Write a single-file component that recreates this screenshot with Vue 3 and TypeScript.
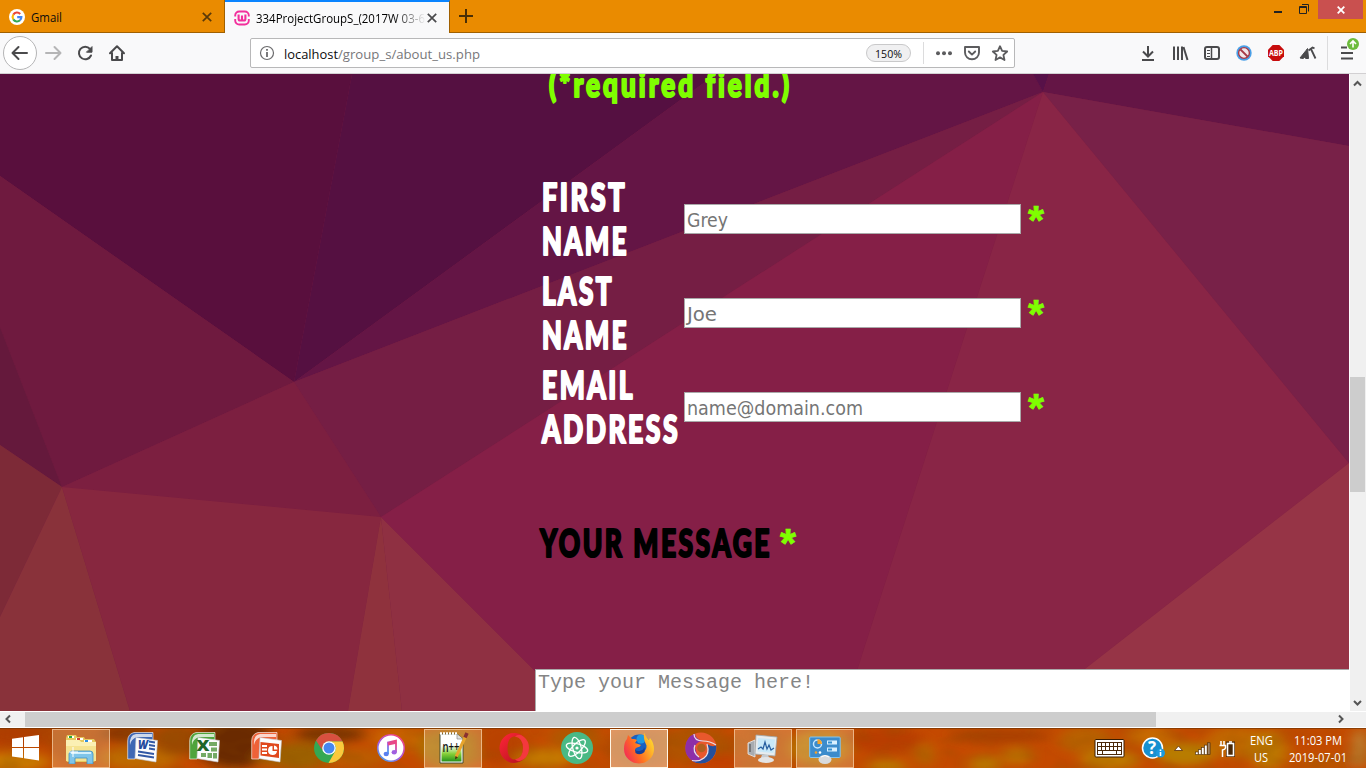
<script setup lang="ts">
import { h } from 'vue'

interface FitProps { t: string; w: number; h: number; b: number }

// One line of text set to an exact advance width.
const Fit = (p: FitProps) =>
  h('svg', { width: p.w, height: p.h, style: { overflow: 'visible', display: 'block', flex: 'none' } }, [
    h('text', { x: 0, y: p.b, textLength: p.w, lengthAdjust: 'spacingAndGlyphs', fill: 'currentColor' }, p.t),
  ])
Fit.props = ['t', 'w', 'h', 'b']

const facets: { pts: string; c: string }[] = [
  { pts: '0,0 352,0 294,308 0,102', c: '#590f3d' },
  { pts: '352,0 716,0 294,308', c: '#551041' },
  { pts: '716,0 1033,0 1043,18 294,308', c: '#641545' },
  { pts: '1033,0 1049,0 1043,18', c: '#571148' },
  { pts: '1049,0 1349,0 1349,72 1043,18', c: '#641545' },
  { pts: '294,308 1043,18 381,443', c: '#751e44' },
  { pts: '0,102 294,308 62,413 0,253', c: '#6f1a3f' },
  { pts: '0,253 62,413 0,371', c: '#65193c' },
  { pts: '0,371 62,413 0,543', c: '#7d2a37' },
  { pts: '0,543 62,413 130,637 0,637', c: '#89323a' },
  { pts: '62,413 294,308 381,443', c: '#7c1f40' },
  { pts: '62,413 381,443 348,637 130,637', c: '#87273f' },
  { pts: '381,443 402,637 348,637', c: '#8f323d' },
  { pts: '381,443 575,637 402,637', c: '#8f3042' },
  { pts: '381,443 1043,18 844,637 575,637', c: '#851f47' },
  { pts: '1043,18 1349,389 1031,637 844,637', c: '#892546' },
  { pts: '1043,18 1349,72 1349,389', c: '#782148' },
  { pts: '1349,389 1349,637 1031,637', c: '#963446' },
]

const rows = [
  { a: 'FIRST', aw: 85, b: 'NAME', bw: 87, ph: 'Grey', pw: 41 },
  { a: 'LAST', aw: 72, b: 'NAME', bw: 87, ph: 'Joe', pw: 30 },
  { a: 'EMAIL', aw: 93, b: 'ADDRESS', bw: 138, ph: 'name@domain.com', pw: 176 },
]

const blobs: [number, number, number, number, string][] = [
  [20, 5, 40, 14, '#b03c00'], [10, 34, 40, 9, '#c87a00'], [75, 14, 30, 18, '#b04400'], [140, 30, 40, 12, '#bd6a00'],
  [125, 5, 26, 9, '#8a3800'], [178, 12, 26, 16, '#9c4a00'], [235, 16, 40, 24, '#6b2a00'], [275, 30, 20, 8, '#a66000'],
  [300, 28, 30, 14, '#9c6000'], [330, 6, 35, 8, '#7a3400'], [355, 30, 32, 10, '#bb5c00'], [400, 10, 30, 12, '#c86200'],
  [450, 20, 32, 20, '#a87000'], [500, 16, 24, 22, '#b94200'], [545, 30, 30, 10, '#c47800'], [575, 10, 26, 12, '#b05800'],
  [640, 20, 34, 20, '#a84a00'], [695, 18, 32, 20, '#b05200'], [720, 34, 30, 8, '#c24000'], [765, 20, 40, 18, '#b84c00'],
  [820, 20, 30, 18, '#b87400'], [885, 12, 40, 12, '#b83c00'], [925, 26, 9, 12, '#bc6800'], [887, 38, 20, 6, '#b87800'],
  [985, 36, 16, 9, '#b87400'], [1017, 28, 15, 9, '#bd7000'], [1000, 8, 50, 7, '#a94000'], [1085, 12, 26, 14, '#b86000'],
  [1110, 32, 30, 10, '#bd7800'], [1150, 8, 24, 10, '#c86a00'], [1185, 26, 30, 12, '#b87c00'], [1235, 14, 30, 16, '#c06600'],
  [1268, 22, 20, 20, '#bb7600'], [1310, 10, 30, 12, '#c24800'], [1325, 34, 30, 8, '#b85400'], [1360, 20, 6, 20, '#b89040'],
]

const tasks: { id: string; open?: boolean; active?: boolean }[] = [
  { id: 'explorer', open: true }, { id: 'word' }, { id: 'excel' }, { id: 'ppt' }, { id: 'chrome' }, { id: 'itunes' },
  { id: 'npp', open: true }, { id: 'opera' }, { id: 'atom' }, { id: 'firefox', active: true }, { id: 'swirl' },
  { id: 'monitor', open: true }, { id: 'panel', open: true },
]
const bars = [0, 1, 2, 3, 4]
const keys = [0, 1, 2, 3, 4, 5]
</script>

<template>
  <div class="screen">
    <div class="tabs">
      <div class="tab">
        <svg class="fav" width="16" height="16" viewBox="0 0 16 16">
          <circle cx="8" cy="8" r="8" fill="#fff" />
          <g fill="none" stroke-width="2.1">
            <path d="M4.3 5.6A4.4 4.4 0 0 1 11.2 4.9" stroke="#ea4335" />
            <path d="M4.3 5.6A4.6 4.6 0 0 0 4.3 10.4" stroke="#fbbc05" />
            <path d="M4.3 10.4A4.4 4.4 0 0 0 11 11.3" stroke="#34a853" />
            <path d="M8.2 8.1H12.4A4.4 4.4 0 0 1 11 11.3" stroke="#4285f4" />
          </g>
        </svg>
        <Fit t="Gmail" :w="31" :h="16" :b="13" />
        <svg class="x" width="10" height="10" viewBox="0 0 10 10"><path d="M.8.8 9.2 9.2M9.2.8.8 9.2" stroke="#5b3a08" stroke-width="1.7" /></svg>
      </div>
      <div class="tab on">
        <svg class="fav" width="16" height="16" viewBox="0 0 16 16">
          <g fill="none" stroke="#f22f9c" stroke-width="1.9">
            <path d="M1.200 6.500V5.500a4 4 0 0 1 4-4h5.600a4 4 0 0 1 4 4v1M1.200 9v1.500a4 4 0 0 0 4 4h5.600a4 4 0 0 0 4-4V9" />
            <path d="M4.600 4.500v4.500a1.500 1.500 0 0 0 1.500 1.500H6.500a1.500 1.500 0 0 0 1.500-1.500V5.500M8 9A1.500 1.500 0 0 0 9.500 10.500h.4a1.500 1.500 0 0 0 1.500-1.500V4.500" stroke-width="2.100" />
          </g>
        </svg>
        <div class="clip"><Fit t="334ProjectGroupS_(2017W 03-6" :w="169" :h="16" :b="13" /></div>
        <svg class="x" width="10" height="10" viewBox="0 0 10 10"><path d="M.8.8 9.200 9.200M9.200.8.8 9.200" stroke="#4a4a4c" stroke-width="1.7" /></svg>
      </div>
      <div class="rest">
        <svg class="plus" width="14" height="14" viewBox="0 0 14 14"><path d="M7 0V14M0 7H14" stroke="#4a2f06" stroke-width="2" /></svg>
        <svg class="ctl" width="36" height="20" viewBox="0 0 36 20">
          <path d="M0 12H8" stroke="#222" stroke-width="2" />
          <path d="M25.500 6.500h7v7h-7zM25 7.500h8M28 4.500h6.500v7" fill="none" stroke="#222" />
        </svg>
        <div class="close"><svg width="8" height="8" viewBox="0 0 8 8"><path d="M.7.7 7.300 7.300M7.300.7.7 7.300" stroke="#fff" stroke-width="1.800" /></svg></div>
      </div>
    </div>

    <div class="bar">
      <svg class="nav" width="134" height="40" viewBox="0 33 134 40">
        <circle cx="20" cy="53" r="16.500" fill="#fff" stroke="#b5b5b6" />
        <g fill="none" stroke="#4a4a4c" stroke-width="2" stroke-linejoin="round" stroke-linecap="round">
          <path d="M13 53H27M18.500 47 12.500 53 18.500 59" />
          <path d="M46 53H60M54.500 47 60.500 53 54.500 59" stroke="#b5b5b6" />
          <path d="M90 48.800A6.300 6.300 0 1 0 91 55.500" />
          <path d="M92 47V52.200H86.800Z" fill="#4a4a4c" stroke-width="1" />
          <path d="M110 53.200 117 46.200 124 53.200M112 53V60H122V53" />
          <path d="M117 60V56" stroke-width="3" stroke-linecap="butt" />
        </g>
      </svg>
      <div class="url">
        <svg class="info" width="16" height="16" viewBox="0 0 16 16"><circle cx="8" cy="8" r="6.500" fill="none" stroke="#6b6b6d" stroke-width="1.200" /><path d="M8 7V12M8 4V5.800" stroke="#6b6b6d" stroke-width="1.800" /></svg>
        <Fit class="host" t="localhost" :w="54" :h="20" :b="16" />
        <Fit class="path" t="/group_s/about_us.php" :w="142" :h="20" :b="16" />
        <div class="pill"><Fit t="150%" :w="27" :h="14" :b="12" /></div>
        <svg class="acts" width="92" height="28" viewBox="922 39 92 28">
          <path d="M923.500 42V64" stroke="#dcdcdd" />
          <g fill="#5c5c5e"><circle cx="938" cy="53.300" r="2" /><circle cx="944" cy="53.300" r="2" /><circle cx="950" cy="53.300" r="2" /></g>
          <g fill="none" stroke="#5c5c5e" stroke-width="1.900" stroke-linejoin="round" stroke-linecap="round">
            <path d="M965 47H979V52.500A7 6.800 0 0 1 965 52.500ZM968.800 51.500 972 54.600 975.200 51.500" />
            <path d="M1000 46.200 1002.100 50.900 1007.200 51.500 1003.400 54.900 1004.500 60 1000 57.400 995.500 60 996.600 54.900 992.800 51.500 997.900 50.900Z" stroke-width="1.800" />
          </g>
        </svg>
      </div>
      <svg class="tools" width="230" height="41" viewBox="1136 33 230 41">
        <g fill="none" stroke="#4a4a4c" stroke-width="2">
          <path d="M1148 46V56M1143 51.500 1148 56.500 1153 51.500M1142 60H1154" />
          <path d="M1174 46.500V60M1178 46.500V60M1182 46.500V60" /><path d="M1183.500 47 1187.500 60" />
          <rect x="1205" y="47" width="14" height="12" rx="2" /><path d="M1211.500 47V59" stroke-width="1.500" /><path d="M1207 50.500H1210M1207 53.500H1210M1207 56.500H1210" stroke-width="1" />
          <path d="M1341 47.500H1347M1341 53H1353M1341 58.500H1353" />
        </g>
        <circle cx="1244" cy="53" r="7.700" fill="#49a0e8" /><circle cx="1244" cy="53" r="5.400" fill="#f2e8ea" stroke="#a83a48" stroke-width="1.400" /><path d="M1240.500 49.500 1247.500 56.500" stroke="#a83a48" stroke-width="1.800" />
        <path d="M1272.700 45H1279.300L1284 49.700V56.300L1279.300 61H1272.700L1268 56.300V49.700Z" fill="#c70d0d" />
        <text x="1276" y="56" text-anchor="middle" font-size="8" font-weight="700" fill="#fff" textLength="14" lengthAdjust="spacingAndGlyphs">ABP</text>
        <path d="M1300 58 1306 50.500 1307.500 48.500 1308 53 1308.500 58.500H1306L1304.500 57.500 1303 58.500Z" fill="#4a4a4c" stroke="#4a4a4c" /><path d="M1308.500 50.500 1312.500 47.500 1314.500 48.300M1311 49 1315.500 58.500" fill="none" stroke="#4a4a4c" stroke-width="1.800" />
        <path d="M1327.500 36V70" stroke="#dcdcdd" />
        <circle cx="1353" cy="44" r="6" fill="#6cbc3c" /><path d="M1353 47.500V41.500M1350 44 1353 41 1356 44" fill="none" stroke="#fff" stroke-width="1.600" />
      </svg>
    </div>

    <div class="view">
      <div class="page">
        <svg class="bg" width="1349" height="637" viewBox="0 0 1349 637">
          <rect width="1349" height="637" fill="#7a1f43" />
          <polygon v-for="f in facets" :key="f.pts" :points="f.pts" :fill="f.c" />
        </svg>
        <div class="form">
          <Fit class="big lime req" t="(*required field.)" :w="243" :h="32" :b="23" />
          <div class="table">
            <div v-for="r in rows" :key="r.a" class="row">
              <div class="label">
                <Fit class="big" :t="r.a" :w="r.aw" :h="44" :b="35" />
                <Fit class="big" :t="r.b" :w="r.bw" :h="44" :b="35" />
              </div>
              <div class="input"><Fit :t="r.ph" :w="r.pw" :h="28" :b="22" /></div>
              <Fit class="star lime" t="*" :w="16" :h="30" :b="29" />
            </div>
          </div>
          <div class="msg">
            <Fit class="big dark" t="YOUR MESSAGE" :w="232" :h="44" :b="35" />
            <Fit class="star lime m" t="*" :w="16" :h="30" :b="35" />
          </div>
          <div class="area"><Fit t="Type your Message here!" :w="276" :h="24" :b="18" /></div>
        </div>
      </div>
      <div class="vs">
        <svg width="16" height="18" viewBox="0 0 16 18"><path d="M4 11.500 7.500 8 11 11.500" fill="none" stroke="#555" stroke-width="2" /></svg>
        <div class="vthumb"></div>
        <svg width="16" height="18" viewBox="0 0 16 18"><path d="M4 8 7.500 11.500 11 8" fill="none" stroke="#555" stroke-width="2" /></svg>
      </div>
    </div>
    <div class="hs">
      <svg width="25" height="15" viewBox="0 0 25 15"><path d="M10 3.500 6.500 7 10 10.500" fill="none" stroke="#555" stroke-width="2" /></svg>
      <div class="hthumb"></div>
      <svg class="hr" width="25" height="15" viewBox="0 0 25 15"><path d="M14 3.500 17.500 7 14 10.500" fill="none" stroke="#555" stroke-width="2" /></svg>
    </div>

    <div class="taskbar">
      <svg class="tbg" width="1366" height="40" viewBox="0 0 1366 40">
        <defs>
          <filter id="soft" x="-20%" y="-60%" width="140%" height="220%"><feGaussianBlur stdDeviation="7 4" /></filter>
          <filter id="grain" x="0" y="0" width="100%" height="100%"><feTurbulence type="fractalNoise" baseFrequency="0.035 0.06" numOctaves="2" seed="4" /><feColorMatrix values="0 0 0 0 .28  0 0 0 0 .08  0 0 0 0 0  0 2.400 0 0 -1" /></filter>
        </defs>
        <rect width="1366" height="40" fill="#c44a00" />
        <g filter="url(#soft)"><ellipse v-for="(b, i) in blobs" :key="i" :cx="b[0]" :cy="b[1]" :rx="b[2]" :ry="b[3]" :fill="b[4]" /></g>
        <rect width="1366" height="40" filter="url(#grain)" opacity=".25" />
        <rect width="1366" height="1" fill="#6b3000" opacity=".6" />
      </svg>
      <div class="start">
        <svg width="27" height="26" viewBox="0 0 27 26"><path d="M0 3.700 11 2.200V12H0ZM12 2 27 0V12H12ZM0 13H11V23L0 21.600ZM12 13H27V25.500L12 23.300Z" fill="#fff" /></svg>
      </div>
      <div v-for="k in tasks" :key="k.id" class="task" :class="{ open: k.open, active: k.active }">
        <svg width="32" height="32" viewBox="0 0 32 32">
          <g v-if="k.id === 'explorer'">
            <path d="M1 6 2 3H11L12 5H19L20 7H29L31 10V28L29 30H2L1 28Z" fill="#e6c95e" />
            <path d="M3 4H9V6H3Z" fill="#fff" /><path d="M4 4h3v2H4z" fill="#20a840" /><path d="M11 6h7v2h-7z" fill="#fff" /><path d="M12 6h3v2h-3z" fill="#d04030" /><path d="M19 8h8v2h-8z" fill="#fff" /><path d="M20 8h3v2h-3z" fill="#3090e0" />
            <path d="M1 8H14L16 10H31V29H1Z" fill="#f5e391" /><path d="M1 8H14L16 10H31V14H1Z" fill="#fbf0b4" />
            <path d="M4 32V22Q4 19 7 19H25Q28 19 28 22V32H22V26H10V32Z" fill="#7fc5ea" stroke="#3f8fc0" stroke-width=".8" /><path d="M6 21H26" stroke="#d2f0fc" stroke-width="2" /><path d="M8 15V25M4 20H13" stroke="#fff" stroke-width="1" />
          </g>
          <g v-else-if="k.id === 'word' || k.id === 'excel' || k.id === 'ppt'">
            <path d="M7 .5H26V8H13L8 27H.7V9Q.7 2 7 .5Z" :fill="k.id === 'word' ? '#3f68b4' : k.id === 'excel' ? '#4fa43c' : '#ee6238'" stroke="#fff" stroke-width=".6" />
            <path d="M9 2H25V5H10Q4 7 3 13Q2 3 9 2Z" fill="#fff" opacity=".75" />
            <path d="M9 5.500 30.500 8.500 29 30 8 26.500Z" fill="#fcfcfc" stroke="#c4c8d0" stroke-width=".6" />
            <g v-if="k.id === 'word'"><text x="11" y="17" font-size="12" font-weight="800" font-style="italic" fill="#244a9c" textLength="10" lengthAdjust="spacingAndGlyphs">W</text><path d="M22 9.500 28 10.500M22 13 28 14M22 16.500 28 17.500M11 19.500 27 22M11 23 27 25.500" stroke="#3158a4" stroke-width="1.800" /></g>
            <g v-else-if="k.id === 'excel'"><path d="M20 10h8v4h-8zM22 15.500h6v4h-6zM12 21h5v4h-5zM18.500 21h4.500v5h-4.500zM24 21h4v5.500h-4z" fill="#74aa64" /><text x="7.500" y="19" font-size="15" font-weight="800" fill="#1e6628" textLength="13" lengthAdjust="spacingAndGlyphs">X</text></g>
            <g v-else><path d="M9.500 10 28 12V26L9.500 23.500Z" fill="#e0481c" /><path d="M11 13H16V15H11ZM11 16.500H16V18.500H11ZM11 20H16V22H11Z" fill="#fff" /><path d="M21.500 14A4.500 4.500 0 1 0 26 19H21.500Z" fill="#fff" /><path d="M23 13.500A4 4 0 0 1 26.500 17.500H23Z" fill="#fff" /></g>
          </g>
          <g v-else-if="k.id === 'chrome'">
            <circle cx="16" cy="16" r="15" fill="#34a853" /><path d="M3 8.500A15 15 0 0 1 29.500 9.500H16A6.800 6.800 0 0 0 9.800 18.800Z" fill="#d8503f" /><path d="M29.500 9.500A15 15 0 0 1 15.500 31L22 19.500A6.800 6.800 0 0 0 16 9.500Z" fill="#fbc93c" /><circle cx="16" cy="16" r="6.800" fill="#fff" /><circle cx="16" cy="16" r="5.500" fill="#4687f0" />
          </g>
          <g v-else-if="k.id === 'itunes'">
            <linearGradient id="it" x1="0" y1="1" x2=".7" y2="0"><stop offset="0" stop-color="#38b0f0" /><stop offset=".5" stop-color="#a858e0" /><stop offset="1" stop-color="#f04480" /></linearGradient>
            <circle cx="16" cy="16" r="13.200" fill="#fff" stroke="url(#it)" stroke-width="1.600" /><path d="M13 22V10.500L21 8.700V20" fill="none" stroke="url(#it)" stroke-width="1.800" /><path d="M13 12 21 10.200" stroke="#e84888" stroke-width="3" /><ellipse cx="11.200" cy="22" rx="2.600" ry="2.200" fill="#5a80f0" /><ellipse cx="19.200" cy="20.200" rx="2.600" ry="2.200" fill="#a060e0" />
          </g>
          <g v-else-if="k.id === 'npp'">
            <linearGradient id="np" x1="0" y1="0" x2="0" y2="1"><stop offset=".35" stop-color="#fff" /><stop offset=".7" stop-color="#86cf38" /><stop offset="1" stop-color="#25921c" /></linearGradient>
            <path d="M3 2H20L26 7V31H3Z" fill="#fff" stroke="#39452e" stroke-width=".9" /><path d="M4.500 4H19L24.500 8V29.500H4.500Z" fill="url(#np)" /><path d="M3 1.500H21" stroke="#fff" stroke-width="2.500" stroke-dasharray="2 1" /><path d="M20 2V7H26" fill="#e0e0e0" stroke="#888" stroke-width=".7" />
            <text x="5.500" y="19.500" font-size="15" font-weight="600" fill="#111" textLength="17" lengthAdjust="spacingAndGlyphs">n++</text>
            <path d="M19 25 28.500 4.500" stroke="#e8a52c" stroke-width="3" /><path d="M28 5.500 30 1" stroke="#8a3030" stroke-width="3.500" /><path d="M18 27.500 18.500 24 21 25.500Z" fill="#4a3010" />
          </g>
          <g v-else-if="k.id === 'opera'">
            <linearGradient id="op" x1="0" y1="0" x2="1" y2="1"><stop offset="0" stop-color="#ff2638" /><stop offset="1" stop-color="#b0101c" /></linearGradient>
            <path fill-rule="evenodd" d="M15 1A14.500 15 0 1 0 15 31 14.500 15 0 1 0 15 1ZM16 4.500C21 4.500 24 9 24 16S21 27.500 16 27.500 8.500 23 8.500 16 11 4.500 16 4.500Z" fill="url(#op)" /><path d="M16 4.500Q20 1 25 5Q30 9 30 16T25 27Q20 31 16 27.500Q24 26 24 16T16 4.500Z" fill="#f4383e" />
          </g>
          <g v-else-if="k.id === 'atom'">
            <circle cx="16" cy="16" r="16" fill="#49b985" /><g fill="none" stroke="#fff" stroke-width="1.300"><ellipse cx="16" cy="16" rx="11" ry="4.200" transform="rotate(15 16 16)" /><ellipse cx="16" cy="16" rx="11" ry="4.200" transform="rotate(75 16 16)" /><ellipse cx="16" cy="16" rx="11" ry="4.200" transform="rotate(135 16 16)" /></g><circle cx="16" cy="16" r="1.600" fill="#fff" />
          </g>
          <g v-else-if="k.id === 'firefox'">
            <linearGradient id="ff" x1="0" y1=".7" x2="1" y2=".2"><stop offset="0" stop-color="#f42c55" /><stop offset=".4" stop-color="#ff7020" /><stop offset="1" stop-color="#ffe030" /></linearGradient>
            <circle cx="16" cy="14" r="11.500" fill="#1a60c0" /><circle cx="18" cy="7" r="4.500" fill="#2098e0" />
            <path d="M21 .5Q22 4 26 8L27 6Q31 11 31 17A15 14.500 0 0 1 1 17Q1 10 4 7L5 3 9 7Q12 6.500 14 8L12 11 18 13Q17 15 14 15.500 12 16 12 18 14 21 18 20.500 24 19 23.500 13.500 20 7 21 .5Z" fill="url(#ff)" /><path d="M12 17.500Q14 20 18 18.500 21 18 21 15 22.500 17 21.500 20 17 24 12.500 21Z" fill="#173f96" />
          </g>
          <g v-else-if="k.id === 'swirl'">
            <circle cx="16" cy="16" r="15.500" fill="#e8582c" /><path d="M10 1.500A15.500 15.500 0 0 0 7 28.700Q10 31 14 31Q5 22 10 14Q13 9 18 9Q10 7 10 1.500Z" fill="#8d2fa8" /><path d="M8 8Q2 18 9 27Q14 31 19 28Q12 26 11 19Z" fill="#8d2fa8" /><path d="M31 13A15.500 15.500 0 0 1 7 28.700Q17 31 21 24Q25 18 22 12Q28 16 31 13Z" fill="#24509c" /><path d="M9 2Q9 9 18 9Q25 9 31 13M22 12Q25 22 19 26Q14 30 7 28.500M10 13Q7 20 14 25" fill="none" stroke="#e8e0e8" stroke-width="1.200" /><circle cx="16.500" cy="16" r="4.300" fill="#b06020" />
          </g>
          <g v-else-if="k.id === 'monitor'">
            <path d="M1 11 8 8V25L1 22Z" fill="#a8acb0" stroke="#eee" stroke-width=".8" /><path d="M3 12V20" stroke="#444" /><path d="M9 3 30 5 28 24 8 22Z" fill="#e8ecee" stroke="#a0a8ac" stroke-width=".8" /><path d="M11 6 28 7.500 26.500 21 10.500 19.500Z" fill="#c8e8f8" /><path d="M11 17 14 15 16 17 18 10 20 17 22 13 24 18 27 16" fill="none" stroke="#2860a0" stroke-width="1.200" /><path d="M15 23H21L23 28H13Z" fill="#c8ccd0" /><ellipse cx="19" cy="28" rx="8" ry="3" fill="#e4e4e4" />
          </g>
          <g v-else>
            <rect x=".7" y="5" width="30.500" height="20.500" rx="1" fill="#3c8ccc" stroke="#85c5ee" /><circle cx="8.500" cy="12" r="4" fill="none" stroke="#c8e8ff" stroke-width="1.500" /><path d="M8.500 12V7A5 5 0 0 1 13 12Z" fill="#f5a32c" /><path d="M18 10.500H28M18 17.500H28" stroke="#d8f0ff" stroke-width="4" /><path d="M19 10.500H23M19 17.500H23" stroke="#3490d0" stroke-width="2" /><circle cx="7" cy="20.500" r="1.300" fill="#f5a32c" /><circle cx="11" cy="20.500" r="1.300" fill="#fff" /><ellipse cx="16" cy="27.500" rx="6.500" ry="4.500" fill="#d8dadc" /><path d="M12 25Q16 22 20 25" stroke="#fff" fill="none" />
          </g>
        </svg>
      </div>
      <svg class="tray" width="146" height="40" viewBox="1092 728 146 40">
        <rect x="1095" y="739.500" width="29" height="17.500" rx="1" fill="#fff" stroke="#3a1c00" /><rect x="1097" y="742" width="25" height="13" fill="#4a2808" />
        <g fill="#fff"><template v-for="n in keys" :key="n"><rect :x="1098 + n * 4" y="743" width="3" height="3" /><rect :x="1098 + n * 4" y="747" width="3" height="3" /></template><rect x="1098" y="751" width="4" height="3" /><rect x="1103" y="751" width="13" height="3" /><rect x="1117" y="751" width="4" height="3" /></g>
        <circle cx="1152.500" cy="748" r="10" fill="#1790d0" stroke="#fff" stroke-width="1.500" /><text x="1152" y="754" text-anchor="middle" font-size="17" font-weight="700" fill="#fff">?</text><circle cx="1160.500" cy="753" r="4.500" fill="#1a9ae0" /><path d="M1160.500 752V756M1160.500 749.500V751" stroke="#fff" stroke-width="1.600" />
        <path d="M1174.500 750.500 1178.500 746 1182.500 750.500Z" fill="#fff" stroke="#5a2c08" stroke-width=".8" />
        <rect v-for="n in bars" :key="n" :x="1195.500 + n * 3" :y="752 - n * 2.300" width="2.600" :height="2.500 + n * 2.300" :fill="n === 4 ? '#a08468' : '#fff'" stroke="#4a2808" stroke-width=".6" />
        <rect x="1226" y="741.500" width="9" height="15.500" fill="#4a2808" /><rect x="1227.500" y="743.500" width="6" height="12" fill="none" stroke="#fff" stroke-width="1.600" /><path d="M1229 742H1232" stroke="#fff" stroke-width="1.500" /><path d="M1221 741V745M1224 741V745M1219.500 745.500H1225.500V748Q1225 749.500 1222.500 750V757" fill="none" stroke="#fff" stroke-width="1.500" />
      </svg>
      <div class="lang"><Fit t="ENG" :w="23" :h="17" :b="14" /><Fit t="US" :w="14" :h="17" :b="14" /></div>
      <div class="clock"><Fit t="11:03 PM" :w="48" :h="17" :b="14" /><Fit t="2019-07-01" :w="58" :h="17" :b="14" /></div>
    </div>
  </div>
</template>

<style>
body { margin: 0; overflow: hidden; }
</style>

<style scoped>
.screen { width: 1366px; height: 768px; overflow: hidden; display: flex; flex-direction: column; font-family: "Open Sans", "Noto Sans", sans-serif; font-size: 12px; color: #0c0c0d; background: #fff; }
svg { display: block; flex: none; }
.tabs { height: 33px; display: flex; background: #ea8b00; }
.tab { box-sizing: border-box; width: 225px; height: 33px; display: flex; align-items: center; padding: 2px 12px 0 9px; border-bottom: 1px solid #a06000; border-right: 1px solid #a06000; font-size: 12px; }
.tab .x { margin-left: auto; }
.fav { margin-right: 6px; }
.tab.on { background: #f9f9fa; border-top: 2px solid #0a84ff; border-bottom: 0; padding: 0 12px 0 9px; color: #000; }
.clip { -webkit-mask-image: linear-gradient(90deg, #000 138px, transparent 170px); mask-image: linear-gradient(90deg, #000 138px, transparent 170px); }
.rest { flex: 1; display: flex; border-bottom: 1px solid #a06000; }
.plus { margin: 9px 0 0 9px; }
.ctl { margin-left: auto; }
.close { width: 45px; height: 19px; margin: 0 3px 0 8px; background: #c9504f; display: flex; align-items: center; justify-content: center; }
.bar { box-sizing: border-box; height: 41px; display: flex; background: #f9f9fa; border-bottom: 1px solid #d2d0d2; }
.url { box-sizing: border-box; width: 765px; height: 30px; margin: 5px 0 0 116px; border: 1px solid #b8b8b9; border-radius: 2px; background: #fff; display: flex; align-items: center; font-size: 13.500px; }
.info { margin: 0 9px 0 8px; }
.path { color: #77777a; }
.pill { box-sizing: border-box; width: 45px; height: 18px; margin-left: auto; border: 1px solid #c9c9ca; border-radius: 9px; background: #f0f0f1; display: flex; justify-content: center; align-items: center; font-size: 11.500px; }
.acts { margin-left: 11px; }
.tools { margin-left: auto; }
.view { height: 637px; display: flex; }
.page { width: 1349px; height: 637px; position: relative; overflow: hidden; }
.bg { position: absolute; left: 0; top: 0; }
.form { position: relative; padding-left: 535px; }
.big { font-family: Lato, "Open Sans", sans-serif; font-weight: 900; font-size: 37px; letter-spacing: 3.500px; color: #fff; stroke: currentColor; stroke-width: 2.200px; stroke-linejoin: round; }
.lime { color: #7fff00; }
.dark { color: #000; }
.req { margin-left: 14px; font-size: 34px; letter-spacing: 4px; }
.table { padding-top: 70px; }
.row { height: 94px; display: flex; }
.label { width: 142px; padding-left: 7px; }
.input { box-sizing: border-box; width: 337px; height: 30px; margin-top: 28px; padding-left: 2px; border: 1px solid #a9a9a9; background: #fff; color: #757575; font-family: "DejaVu Sans Condensed", "DejaVu Sans", sans-serif; font-size: 20px; display: flex; }
.star { font-family: "Liberation Sans", sans-serif; font-weight: 700; font-size: 40px; stroke: currentColor; stroke-width: .7px; margin: 29px 0 0 7px; }
.msg { height: 44px; margin: 64px 0 0 5px; display: flex; }
.star.m { margin: 0 0 0 8px; }
.area { box-sizing: border-box; width: 900px; height: 60px; margin-top: 103px; border: 1px solid #a9a9a9; background: #fff; color: #858585; padding-left: 2px; font-family: "Liberation Mono", monospace; font-size: 20px; }
.vs { box-sizing: border-box; width: 17px; height: 637px; border-left: 1px solid #fff; background: #f0f0f0; display: flex; flex-direction: column; }
.vthumb { width: 15px; height: 115px; margin: 285px 0 auto; background: #cdcdcd; }
.hs { box-sizing: border-box; height: 17px; border: solid #fff; border-width: 1px 0; background: #f0f0f0; display: flex; }
.hthumb { width: 1131px; background: #cdcdcd; }
.hr { margin-left: 169px; }
.taskbar { height: 40px; position: relative; display: flex; align-items: center; }
.tbg { position: absolute; left: 0; top: 0; }
.start, .task, .tray, .lang, .clock { position: relative; }
.start { width: 40px; padding-left: 12px; }
.task { box-sizing: border-box; width: 58px; height: 39px; margin-right: 4px; border: 1px solid transparent; display: flex; align-items: center; justify-content: center; }
.task.open { border-color: rgba(255, 225, 190, .6); background: rgba(255, 215, 170, .3); }
.task.active { border-color: #fff6e6; background: rgba(255, 225, 195, .5); }
.tray { margin-left: 234px; }
.lang, .clock { display: flex; flex-direction: column; align-items: center; color: #fff; font-size: 12px; }
.lang { width: 46px; }
.clock { width: 68px; }
</style>
